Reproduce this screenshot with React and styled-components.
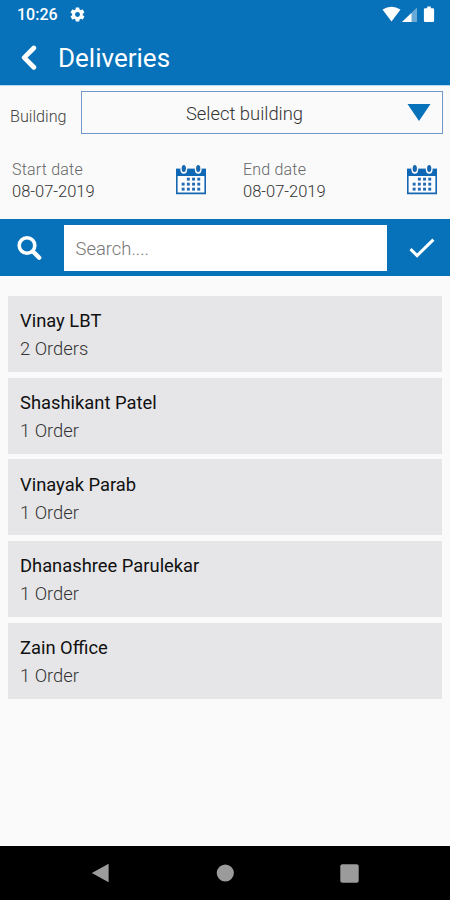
import styled, { createGlobalStyle } from "styled-components";

const orders = [
  { name: "Vinay LBT", count: "2 Orders" },
  { name: "Shashikant Patel", count: "1 Order" },
  { name: "Vinayak Parab", count: "1 Order" },
  { name: "Dhanashree Parulekar", count: "1 Order" },
  { name: "Zain Office", count: "1 Order" },
];

const CalendarIcon = () => (
  <svg width="30" height="31" viewBox="0 0 30 31">
    <path d="M0.8 5h28.4v23.4H0.8z" fill="#fcfdff" stroke="#1766b0" strokeWidth="1.6" />
    <path d="M0 3.6h30v7.4H0z" fill="#0f68b5" />
    <ellipse cx="7.8" cy="4.2" rx="3.4" ry="4.6" fill="#fafafa" />
    <ellipse cx="22.2" cy="4.2" rx="3.4" ry="4.6" fill="#fafafa" />
    <ellipse cx="7.8" cy="3.6" rx="2.1" ry="3.5" fill="#1766b0" />
    <ellipse cx="22.2" cy="3.6" rx="2.1" ry="3.5" fill="#1766b0" />
    {[13.4, 18.4, 23.4].map((y, row) =>
      [6, 11.2, 16.4, 21.6].map((x, col) =>
        row === 0 && col === 0 ? null : (
          <rect key={`${x}-${y}`} x={x - 0.3} y={y - 0.7} width="2.9" height="2.9" fill="#2469b1" />
        )
      )
    )}
  </svg>
);

const DateField = ({ label, value }) => (
  <DateColumn>
    <div>
      <DateLabel>{label}</DateLabel>
      <DateValue>{value}</DateValue>
    </div>
    <CalendarIcon />
  </DateColumn>
);

const App = () => {
  return (
    <>
      <GlobalStyle />
      <Screen>
        <StatusBar>
          <Clock>10:26</Clock>
          <svg className="gear" width="17" height="17" viewBox="0 0 24 24">
            <path
              fill="#fff"
              d="M19.43 12.98c.04-.32.07-.64.07-.98s-.03-.66-.07-.98l2.11-1.65c.19-.15.24-.42.12-.64l-2-3.46c-.12-.22-.39-.3-.61-.22l-2.49 1c-.52-.4-1.08-.73-1.69-.98l-.38-2.65A.488.488 0 0 0 14 2h-4c-.25 0-.46.18-.49.42l-.38 2.65c-.61.25-1.17.59-1.69.98l-2.49-1c-.23-.09-.49 0-.61.22l-2 3.46c-.13.22-.07.49.12.64l2.11 1.65c-.04.32-.07.65-.07.98s.03.66.07.98l-2.11 1.65c-.19.15-.24.42-.12.64l2 3.46c.12.22.39.3.61.22l2.49-1c.52.4 1.08.73 1.69.98l.38 2.65c.03.24.24.42.49.42h4c.25 0 .46-.18.49-.42l.38-2.65c.61-.25 1.17-.59 1.69-.98l2.49 1c.23.09.49 0 .61-.22l2-3.46c.12-.22.07-.49-.12-.64l-2.11-1.65zM12 15.5a3.5 3.5 0 1 1 0-7 3.5 3.5 0 0 1 0 7z"
            />
          </svg>
          <svg className="signals" width="54" height="17" viewBox="0 0 54 17">
            <path d="M0.5 3.5Q9.5-2.2 18.5 3.5L9.5 15.5z" fill="#fff" />
            <path d="M35 1.5v14.5H20z" fill="#69a9d6" />
            <path d="M29.5 7V16H20z" fill="#fff" />
            <path d="M45.2 0.6h3.6v1.7h2.1q1.2 0 1.2 1.2v11.3q0 1.2-1.2 1.2h-7.8q-1.2 0-1.2-1.2V3.5q0-1.2 1.2-1.2h2.1z" fill="#fff" />
          </svg>
        </StatusBar>
        <TitleBar>
          <svg width="16" height="26" viewBox="0 0 16 26">
            <path d="M12.8 3L3.2 12.6l9.6 9.6" fill="none" stroke="#fff" strokeWidth="4.8" strokeLinejoin="round" strokeLinecap="round" />
          </svg>
          <Title>Deliveries</Title>
        </TitleBar>
        <Filters>
          <BuildingRow>
            <BuildingLabel>Building</BuildingLabel>
            <Select>
              <span>Select building</span>
              <svg width="24" height="17" viewBox="0 0 24 17">
                <path d="M0.5 0h23L12 17z" fill="#0772ba" />
              </svg>
            </Select>
          </BuildingRow>
          <DateRow>
            <DateField label="Start date" value="08-07-2019" />
            <DateField label="End date" value="08-07-2019" />
          </DateRow>
        </Filters>
        <SearchBar>
          <svg width="26" height="26" viewBox="0 0 26 26">
            <circle cx="10" cy="10.5" r="7.8" fill="none" stroke="#fff" strokeWidth="3.6" />
            <path d="M16 16.5l6.2 6.2" stroke="#fff" strokeWidth="4.4" strokeLinecap="round" />
          </svg>
          <SearchInput placeholder="Search...." />
          <svg width="26" height="20" viewBox="0 0 26 20">
            <path d="M1.5 11.2l6.6 6.4L24.4 1.6" fill="none" stroke="#fff" strokeWidth="3" />
          </svg>
        </SearchBar>
        <OrderList>
          {orders.map((order) => (
            <OrderCard key={order.name}>
              <CustomerName>{order.name}</CustomerName>
              <OrderCount>{order.count}</OrderCount>
            </OrderCard>
          ))}
        </OrderList>
        <NavBar>
          <svg width="18" height="20" viewBox="0 0 18 20">
            <path d="M17.6 0.7v18.6L0.8 10z" fill="#9b9b9b" />
          </svg>
          <svg width="18" height="18" viewBox="0 0 18 18">
            <circle cx="9.3" cy="9" r="8.6" fill="#9b9b9b" />
          </svg>
          <svg width="19" height="19" viewBox="0 0 19 19">
            <rect x="0.3" y="0.3" width="18.4" height="18.4" rx="2" fill="#9b9b9b" />
          </svg>
        </NavBar>
      </Screen>
    </>
  );
};

const GlobalStyle = createGlobalStyle`
  * {
    box-sizing: border-box;
  }
  body {
    margin: 0;
    font-family: "Roboto", sans-serif;
  }
  svg {
    display: block;
    flex-shrink: 0;
  }
`;
const Screen = styled.div`
  width: 450px;
  height: 900px;
  background: #fafafa;
  display: flex;
  flex-direction: column;
  overflow: hidden;
`;
const StatusBar = styled.header`
  height: 30px;
  flex-shrink: 0;
  background: #0772ba;
  display: flex;
  align-items: center;
  padding: 0 15px 0 17px;
  .gear {
    margin: 0 0 1px 12px;
  }
  .signals {
    margin: 0 -1px 2px auto;
  }
`;
const Clock = styled.span`
  width: 40px;
  font-weight: 500;
  font-size: 16px;
  line-height: 20px;
  color: #ffffff;
`;
const TitleBar = styled.div`
  height: 55px;
  flex-shrink: 0;
  background: #0772ba;
  display: flex;
  align-items: center;
  gap: 21px;
  padding-left: 21px;
`;
const Title = styled.h1`
  margin: 0;
  font-weight: 400;
  font-size: 26px;
  line-height: 32px;
  color: #ffffff;
`;
const Filters = styled.section`
  height: 134px;
  flex-shrink: 0;
  border-top: 1px solid #b4d8f5;
  padding: 5px 7px 0 10px;
`;
const BuildingRow = styled.div`
  display: flex;
  align-items: center;
`;
const BuildingLabel = styled.label`
  width: 71px;
  padding-top: 8px;
  font-weight: 300;
  font-size: 16.2px;
  line-height: 20px;
  color: #444444;
`;
const Select = styled.div`
  flex: 1;
  height: 43px;
  border: 1px solid #7198c8;
  display: flex;
  align-items: center;
  padding-right: 11px;
  span {
    flex: 1;
    padding-top: 3px;
    text-align: center;
    font-weight: 300;
    font-size: 18.4px;
    line-height: 24px;
    color: #333333;
  }
`;
const DateRow = styled.div`
  display: grid;
  grid-template-columns: 194px 194px;
  column-gap: 37px;
  padding: 25px 0 0 2px;
`;
const DateColumn = styled.div`
  display: flex;
  justify-content: space-between;
  align-items: center;
  svg {
    margin-bottom: 2px;
  }
`;
const DateLabel = styled.div`
  font-weight: 300;
  font-size: 16px;
  line-height: 22px;
  letter-spacing: 0.2px;
  color: #666666;
`;
const DateValue = styled.div`
  font-weight: 300;
  font-size: 16.5px;
  line-height: 22px;
  color: #333333;
`;
const SearchBar = styled.div`
  height: 57px;
  flex-shrink: 0;
  background: #0772ba;
  display: flex;
  align-items: center;
  padding: 1px 15px 0 17px;
  justify-content: space-between;
`;
const SearchInput = styled.input`
  width: 323px;
  height: 46px;
  margin-left: -2px;
  border: 0;
  border-radius: 0;
  padding: 0 12px;
  background: #ffffff;
  font-family: inherit;
  font-weight: 300;
  font-size: 18.4px;
  &::placeholder {
    color: #777777;
    opacity: 1;
  }
`;
const OrderList = styled.main`
  flex: 1;
  display: flex;
  flex-direction: column;
  gap: 5.7px;
  padding: 20px 8px 0;
`;
const OrderCard = styled.article`
  height: 76px;
  background: #e6e6e8;
  padding: 11.3px 12px;
`;
const CustomerName = styled.div`
  font-size: 18.35px;
  line-height: 28px;
  color: #111111;
`;
const OrderCount = styled.div`
  font-weight: 300;
  font-size: 18.35px;
  line-height: 28px;
  color: #333333;
`;
const NavBar = styled.nav`
  height: 54px;
  flex-shrink: 0;
  background: #000000;
  display: flex;
  align-items: center;
  justify-content: space-between;
  padding: 0 91px;
`;

export default App;
